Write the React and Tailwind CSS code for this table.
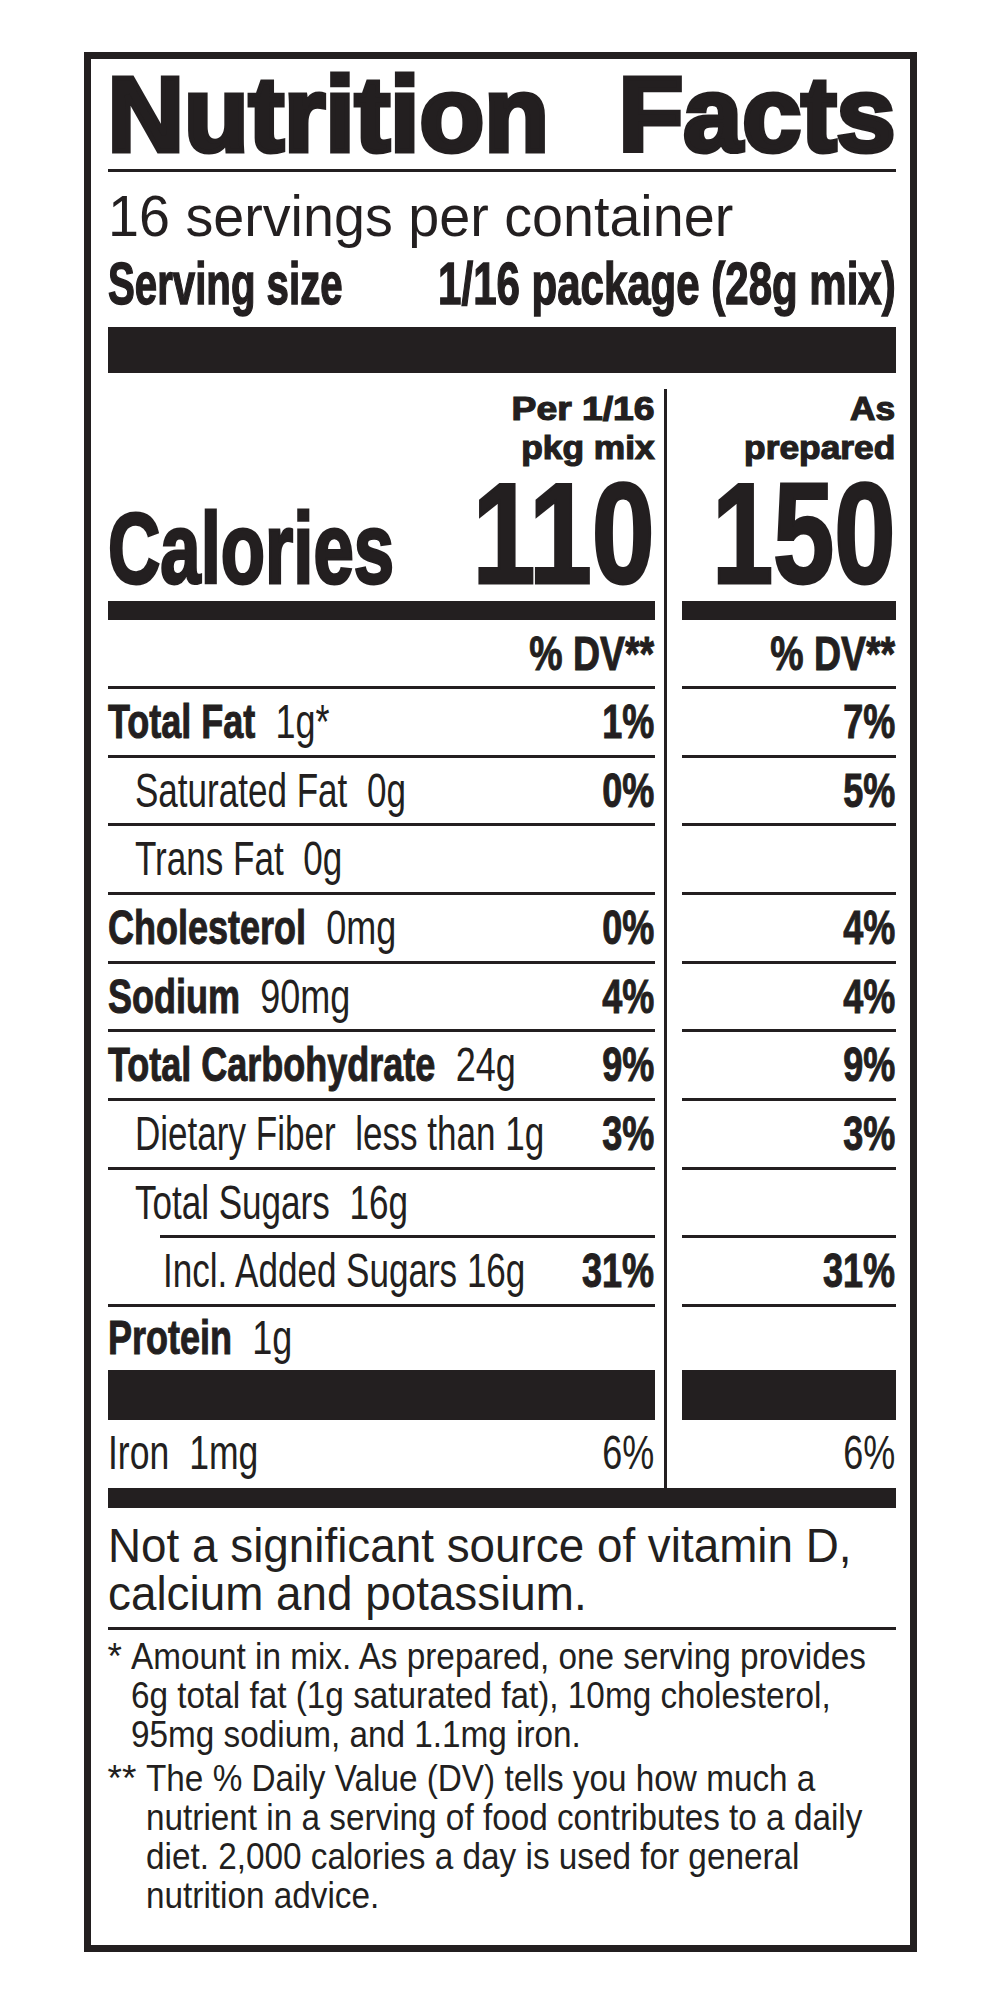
import React from "react";

// Label data
const nutrients = [
  { name: "Total Fat", amount: "1g*", dv: "1%", prep: "7%", bold: true },
  { name: "Saturated Fat", amount: "0g", dv: "0%", prep: "5%", indent: 1 },
  { name: "Trans Fat", amount: "0g", indent: 1 },
  { name: "Cholesterol", amount: "0mg", dv: "0%", prep: "4%", bold: true },
  { name: "Sodium", amount: "90mg", dv: "4%", prep: "4%", bold: true },
  { name: "Total Carbohydrate", amount: "24g", dv: "9%", prep: "9%", bold: true },
  { name: "Dietary Fiber", amount: "less than 1g", dv: "3%", prep: "3%", indent: 1 },
  { name: "Total Sugars", amount: "16g", indent: 1 },
  { name: "Incl. Added Sugars 16g", dv: "31%", prep: "31%", indent: 2, shortRule: true },
  { name: "Protein", amount: "1g", bold: true, last: true },
];

const indents = { 0: "", 1: "pl-[27px]", 2: "pl-[55px]" };

function Pct({ children, bold = true }) {
  return (
    <div className="flex shrink-0 justify-end">
      <span
        className={
          bold
            ? "inline-block origin-right scale-x-[0.75] whitespace-nowrap text-[48px] font-bold leading-none [-webkit-text-stroke:1px_#231f20]"
            : "inline-block origin-right scale-x-[0.75] whitespace-nowrap text-[48px] leading-none"
        }
      >
        {children}
      </span>
    </div>
  );
}

function LeftRow({ n }) {
  return (
    <>
      <div className={n.shortRule ? "ml-[52px] h-[3px] bg-[#231f20]" : "h-[3px] bg-[#231f20]"} />
      <div className={n.last ? "flex h-[63px] justify-between pt-[7px]" : "flex h-[65.67px] justify-between pt-[9px]"}>
        <div className={"min-w-0 flex-1 " + indents[n.indent || 0]}>
          <span
            className={
              n.bold
                ? "inline-block origin-left scale-x-[0.75] whitespace-nowrap text-[48px] leading-none"
                : "inline-block origin-left scale-x-[0.73] whitespace-nowrap text-[48px] leading-none"
            }
          >
            <span className={n.bold ? "font-bold [-webkit-text-stroke:1px_#231f20]" : ""}>{n.name}</span>
            {n.amount && <span className="ml-[27px]">{n.amount}</span>}
          </span>
        </div>
        {n.dv && <Pct>{n.dv}</Pct>}
      </div>
    </>
  );
}

function RightRow({ n }) {
  return (
    <>
      <div className="h-[3px] bg-[#231f20]" />
      <div className={n.last ? "flex h-[63px] justify-end pt-[7px]" : "flex h-[65.67px] justify-end pt-[9px]"}>
        {n.prep && <Pct>{n.prep}</Pct>}
      </div>
    </>
  );
}

export default function App() {
  return (
    <div className="min-h-[2001px] overflow-hidden bg-white pt-[52px] font-['Liberation_Sans',Arial,sans-serif] text-[#231f20]">
      <div className="mx-auto w-[833px] border-[7px] border-[#231f20] pt-[1px] pr-[14px] pb-[30px] pl-[17px]">
        {/* Title */}
        <div className="flex justify-between text-[106px] font-bold leading-[108px] [-webkit-text-stroke:5px_#231f20]">
          <span className="whitespace-nowrap">Nutrition</span>
          <span className="whitespace-nowrap">Facts</span>
        </div>
        <div className="mt-[1px] h-[3px] bg-[#231f20]" />

        {/* Servings */}
        <div className="mt-[15px] text-[58px] leading-none">
          <span className="inline-block origin-left scale-x-[0.96] whitespace-nowrap">16 servings per container</span>
        </div>
        <div className="mt-[9px] flex justify-between text-[60px] font-bold leading-none [-webkit-text-stroke:1.5px_#231f20]">
          <div className="w-[240px]">
            <span className="inline-block origin-left scale-x-[0.67] whitespace-nowrap">Serving size</span>
          </div>
          <div className="flex w-[460px] justify-end">
            <span className="inline-block origin-right scale-x-[0.7] whitespace-nowrap">1/16 package (28g mix)</span>
          </div>
        </div>
        <div className="mt-[13px] h-[46px] bg-[#231f20]" />

        {/* Two columns */}
        <div className="flex">
          {/* Per package */}
          <div className="flex w-[547px] flex-col">
            <div className="mt-[16px] flex h-[78px] flex-col items-end text-[33px] font-bold leading-[39px] [-webkit-text-stroke:1.2px_#231f20]">
              <span className="inline-block origin-right scale-x-[1.13] whitespace-nowrap">Per 1/16</span>
              <span className="inline-block origin-right scale-x-[1.07] whitespace-nowrap">pkg mix</span>
            </div>
            <div className="flex h-[134px] items-baseline justify-between">
              <div className="min-w-0 flex-1">
                <span className="inline-block origin-left scale-x-[0.725] whitespace-nowrap text-[100px] font-bold leading-none [-webkit-text-stroke:3px_#231f20]">
                  Calories
                </span>
              </div>
              <span className="inline-block shrink-0 origin-right scale-x-[0.79] text-[143px] font-bold leading-[134px] [-webkit-text-stroke:3px_#231f20]">
                110
              </span>
            </div>
            <div className="h-[19px] bg-[#231f20]" />
            <div className="flex h-[66px] justify-end pt-[10px]">
              <span className="inline-block origin-right scale-x-[0.78] whitespace-nowrap text-[48px] font-bold leading-none [-webkit-text-stroke:1px_#231f20]">
                % DV**
              </span>
            </div>
            {nutrients.map((n) => (
              <LeftRow key={n.name} n={n} />
            ))}
            <div className="h-[50px] bg-[#231f20]" />
            <div className="flex h-[68px] justify-between pt-[9px]">
              <div className="min-w-0 flex-1">
                <span className="inline-block origin-left scale-x-[0.74] whitespace-nowrap text-[48px] leading-none">
                  Iron<span className="ml-[27px]">1mg</span>
                </span>
              </div>
              <Pct bold={false}>6%</Pct>
            </div>
          </div>

          {/* Divider */}
          <div className="mt-[16px] mr-[15px] ml-[9px] w-[3px] bg-[#231f20]" />

          {/* As prepared */}
          <div className="flex min-w-0 flex-1 flex-col">
            <div className="mt-[16px] flex h-[78px] flex-col items-end text-[33px] font-bold leading-[39px] [-webkit-text-stroke:1.2px_#231f20]">
              <span className="inline-block origin-right scale-x-[1.07] whitespace-nowrap">As</span>
              <span className="inline-block origin-right scale-x-[1.07] whitespace-nowrap">prepared</span>
            </div>
            <div className="flex h-[134px] items-baseline justify-end">
              <span className="inline-block shrink-0 origin-right scale-x-[0.77] text-[143px] font-bold leading-[134px] [-webkit-text-stroke:3px_#231f20]">
                150
              </span>
            </div>
            <div className="h-[19px] bg-[#231f20]" />
            <div className="flex h-[66px] justify-end pt-[10px]">
              <span className="inline-block origin-right scale-x-[0.78] whitespace-nowrap text-[48px] font-bold leading-none [-webkit-text-stroke:1px_#231f20]">
                % DV**
              </span>
            </div>
            {nutrients.map((n) => (
              <RightRow key={n.name} n={n} />
            ))}
            <div className="h-[50px] bg-[#231f20]" />
            <div className="flex h-[68px] justify-end pt-[9px]">
              <Pct bold={false}>6%</Pct>
            </div>
          </div>
        </div>

        <div className="h-[20px] bg-[#231f20]" />

        {/* Vitamins note */}
        <div className="mt-[13px] text-[49px] leading-[48px]">
          <span className="inline-block origin-left scale-x-[0.935] whitespace-nowrap">
            Not a significant source of vitamin D,
            <br />
            calcium and potassium.
          </span>
        </div>
        <div className="mt-[10px] h-[3px] bg-[#231f20]" />

        {/* Footnotes */}
        <div className="mt-[7px] flex text-[37px] leading-[39px]">
          <span className="w-[23px] shrink-0">*</span>
          <span className="inline-block origin-left scale-x-[0.9] whitespace-nowrap">
            Amount in mix. As prepared, one serving provides
            <br />
            6g total fat (1g saturated fat), 10mg cholesterol,
            <br />
            95mg sodium, and 1.1mg iron.
          </span>
        </div>
        <div className="mt-[5px] flex text-[37px] leading-[39px]">
          <span className="w-[38px] shrink-0">**</span>
          <span className="inline-block origin-left scale-x-[0.9] whitespace-nowrap">
            The % Daily Value (DV) tells you how much a
            <br />
            nutrient in a serving of food contributes to a daily
            <br />
            diet. 2,000 calories a day is used for general
            <br />
            nutrition advice.
          </span>
        </div>
      </div>
    </div>
  );
}
